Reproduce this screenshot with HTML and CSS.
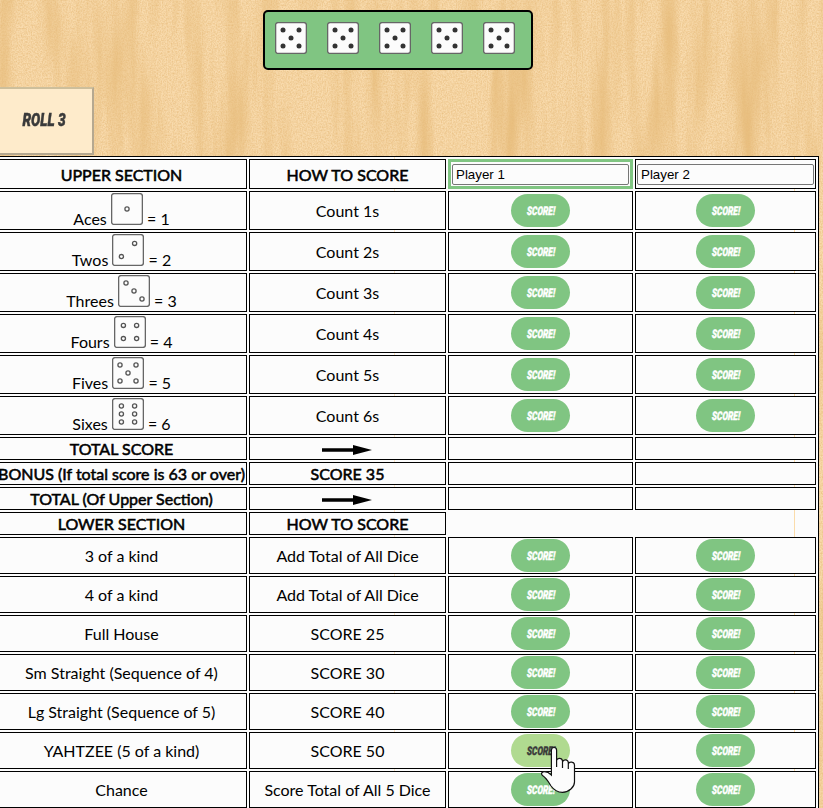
FILE: index.html
```html
<!DOCTYPE html>
<html lang="en">
<head>
<meta charset="utf-8">
<title>Yahtzee</title>
<link rel="stylesheet" href="styles.css">
</head>
<body>
<svg class="wood" aria-hidden="true">
  <filter id="streaks" x="0" y="0" width="100%" height="100%" color-interpolation-filters="sRGB">
    <feTurbulence type="fractalNoise" baseFrequency="0.05 0.005" numOctaves="3" seed="11"/>
    <feColorMatrix values="0 0 0 0 0.9  0 0 0 0 0.73  0 0 0 0 0.47  1.8 0 0 0 -0.75"/>
  </filter>
  <filter id="grain" x="0" y="0" width="100%" height="100%" color-interpolation-filters="sRGB">
    <feTurbulence type="fractalNoise" baseFrequency="0.8 0.6" numOctaves="2" seed="3"/>
    <feColorMatrix values="0 0 0 0 0.9  0 0 0 0 0.73  0 0 0 0 0.48  0 1.3 0 0 -0.4"/>
  </filter>
  <rect width="100%" height="100%" filter="url(#streaks)"/>
  <rect width="100%" height="100%" filter="url(#grain)"/>
</svg>
<svg class="defs" aria-hidden="true">
  <symbol id="face" viewBox="0 0 32 32"><rect x=".6" y=".6" width="30.800" height="30.800" rx="2.500" fill="#fcfcfc" stroke="#666" stroke-width="1.400"/></symbol>
  <symbol id="rolled" viewBox="0 0 32 32"><use href="#face"/><g fill="#333"><circle cx="8" cy="8" r="2.5"/><circle cx="24" cy="8" r="2.5"/><circle cx="16" cy="16" r="2.5"/><circle cx="8" cy="24" r="2.5"/><circle cx="24" cy="24" r="2.5"/></g></symbol>
  <symbol id="arrow" viewBox="0 0 50 10"><path d="M0 3.2H31V0L50 5L31 10V6.8H0Z"/></symbol>
</svg>
<header class="tray">
  <svg class="die"><use href="#rolled"/></svg>
  <svg class="die"><use href="#rolled"/></svg>
  <svg class="die"><use href="#rolled"/></svg>
  <svg class="die"><use href="#rolled"/></svg>
  <svg class="die"><use href="#rolled"/></svg>
</header>
<button class="roll"><span>ROLL 3</span></button>
<main class="card">
  <div class="cell head">UPPER SECTION</div><div class="cell head">HOW TO SCORE</div>
  <div class="cell active"><input value="Player 1"></div><div class="cell"><input value="Player 2"></div>

  <div class="cell dice"><p>Aces <svg class="die"><use href="#face"/><circle cx="16" cy="16" r="2.1"/></svg> = 1</p></div><div class="cell">Count 1s</div>
  <div class="cell"><button class="score"><span>SCORE!</span></button></div><div class="cell"><button class="score"><span>SCORE!</span></button></div>

  <div class="cell dice"><p>Twos <svg class="die"><use href="#face"/><circle cx="22.6" cy="9.4" r="2.1"/><circle cx="9.4" cy="22.6" r="2.1"/></svg> = 2</p></div><div class="cell">Count 2s</div>
  <div class="cell"><button class="score"><span>SCORE!</span></button></div><div class="cell"><button class="score"><span>SCORE!</span></button></div>

  <div class="cell dice"><p>Threes <svg class="die"><use href="#face"/><circle cx="8" cy="8" r="2.1"/><circle cx="16" cy="16" r="2.1"/><circle cx="24" cy="24" r="2.1"/></svg> = 3</p></div><div class="cell">Count 3s</div>
  <div class="cell"><button class="score"><span>SCORE!</span></button></div><div class="cell"><button class="score"><span>SCORE!</span></button></div>

  <div class="cell dice"><p>Fours <svg class="die"><use href="#face"/><circle cx="9.4" cy="9.4" r="2.1"/><circle cx="22.6" cy="9.4" r="2.1"/><circle cx="9.4" cy="22.6" r="2.1"/><circle cx="22.6" cy="22.6" r="2.1"/></svg> = 4</p></div><div class="cell">Count 4s</div>
  <div class="cell"><button class="score"><span>SCORE!</span></button></div><div class="cell"><button class="score"><span>SCORE!</span></button></div>

  <div class="cell dice"><p>Fives <svg class="die"><use href="#face"/><circle cx="8" cy="8" r="2.1"/><circle cx="24" cy="8" r="2.1"/><circle cx="16" cy="16" r="2.1"/><circle cx="8" cy="24" r="2.1"/><circle cx="24" cy="24" r="2.1"/></svg> = 5</p></div><div class="cell">Count 5s</div>
  <div class="cell"><button class="score"><span>SCORE!</span></button></div><div class="cell"><button class="score"><span>SCORE!</span></button></div>

  <div class="cell dice"><p>Sixes <svg class="die"><use href="#face"/><circle cx="9.4" cy="8" r="2.1"/><circle cx="22.6" cy="8" r="2.1"/><circle cx="9.4" cy="16" r="2.1"/><circle cx="22.6" cy="16" r="2.1"/><circle cx="9.4" cy="24" r="2.1"/><circle cx="22.6" cy="24" r="2.1"/></svg> = 6</p></div><div class="cell">Count 6s</div>
  <div class="cell"><button class="score"><span>SCORE!</span></button></div><div class="cell"><button class="score"><span>SCORE!</span></button></div>

  <div class="cell head">TOTAL SCORE</div><div class="cell"><svg class="arrow"><use href="#arrow"/></svg></div><div class="cell"></div><div class="cell"></div>
  <div class="cell head">BONUS (If total score is 63 or over)</div><div class="cell head">SCORE 35</div><div class="cell"></div><div class="cell"></div>
  <div class="cell head">TOTAL (Of Upper Section)</div><div class="cell"><svg class="arrow"><use href="#arrow"/></svg></div><div class="cell"></div><div class="cell"></div>
  <div class="cell head">LOWER SECTION</div><div class="cell head">HOW TO SCORE</div><div class="blank"></div>

  <div class="cell">3 of a kind</div><div class="cell">Add Total of All Dice</div>
  <div class="cell"><button class="score"><span>SCORE!</span></button></div><div class="cell"><button class="score"><span>SCORE!</span></button></div>

  <div class="cell">4 of a kind</div><div class="cell">Add Total of All Dice</div>
  <div class="cell"><button class="score"><span>SCORE!</span></button></div><div class="cell"><button class="score"><span>SCORE!</span></button></div>

  <div class="cell">Full House</div><div class="cell">SCORE 25</div>
  <div class="cell"><button class="score"><span>SCORE!</span></button></div><div class="cell"><button class="score"><span>SCORE!</span></button></div>

  <div class="cell">Sm Straight (Sequence of 4)</div><div class="cell">SCORE 30</div>
  <div class="cell"><button class="score"><span>SCORE!</span></button></div><div class="cell"><button class="score"><span>SCORE!</span></button></div>

  <div class="cell">Lg Straight (Sequence of 5)</div><div class="cell">SCORE 40</div>
  <div class="cell"><button class="score"><span>SCORE!</span></button></div><div class="cell"><button class="score"><span>SCORE!</span></button></div>

  <div class="cell">YAHTZEE (5 of a kind)</div><div class="cell">SCORE 50</div>
  <div class="cell"><button class="score hover"><span>SCORE!</span></button></div><div class="cell"><button class="score"><span>SCORE!</span></button></div>

  <div class="cell">Chance</div><div class="cell">Score Total of All 5 Dice</div>
  <div class="cell"><button class="score"><span>SCORE!</span></button></div><div class="cell"><button class="score"><span>SCORE!</span></button></div>
</main>
<svg class="cursor" viewBox="0 0 36 48" aria-hidden="true"><path d="M11.4 29V4.2C11.4 .6 16.6 .6 16.6 4.2V21V14.5C17.2 11.6 22 11.8 22.5 15V22V16C23.2 13 28 13.4 28.3 16.5V23V18C29 15.2 34.5 15.5 34.5 19V36C34.5 41 29 46.3 22.5 46.3C16.5 46.3 13.5 43.5 11 40C8.5 36 6.5 32 2.5 29.5C.5 27.5 2 25.7 4.5 25.7C7.5 25.7 9.5 27.2 11.4 29Z"/></svg>
</body>
</html>
```
FILE: styles.css
```css
* { box-sizing: border-box; }
body {
  margin: 0;
  height: 808px;
  overflow: hidden;
  background: #f9dbad;
  font: 16px/20px Lato, sans-serif;
  color: #000;
}
.wood { position: fixed; inset: 0; width: 100%; height: 100%; z-index: -1; }
.defs { position: absolute; width: 0; height: 0; }
.die { width: 32px; height: 32px; flex: none; }
.tray {
  display: flex;
  gap: 20px;
  width: 270px;
  height: 60px;
  margin: 10px 0 17px 263px;
  padding: 10px;
  border: 2px solid #000;
  border-radius: 5px;
  background: #80c582;
}
.roll {
  display: block;
  width: 98px;
  height: 68px;
  margin: 0 0 1px -4px;
  padding: 0;
  border: 2px solid;
  border-color: #cdbf9c #b5a890 #b5a890 #cdbf9c;
  background: #feebcb;
  color: #3a3a3a;
  font: italic 900 19px/22px "Roboto", sans-serif;
}
.roll span {
  display: inline-block;
  transform: translate(-1px, -1px) scaleX(.72);
  -webkit-text-stroke: .5px currentColor;
}
.card {
  display: grid;
  grid-template-columns: 251px 197px 185px 181px;
  grid-template-rows: 30px repeat(6, 39px) repeat(4, 23px) repeat(7, 37px);
  gap: 2px;
  width: 826px;
  margin-left: -7px;
  padding: 2px;
  border: 1px solid #000;
  background:
    linear-gradient(#fbdcab, #fbdcab) 800px 0 / 1px 100% no-repeat,
    linear-gradient(#fbe6c8, #fbe6c8) 400px 0 / 1px 100% no-repeat,
    #fcfcfc;
}
.cell {
  display: flex;
  align-items: center;
  justify-content: center;
  border: 1px solid #000;
  background: #fcfcfc;
  white-space: nowrap;
  min-width: 0;
  padding-top: 1px;
}
.cell:has(.score), .cell:has(input) { padding-top: 0; }
.head { -webkit-text-stroke: .55px #000; }
.active { border: 3px solid #80c582; }
.blank { grid-column: span 2; }
.dice { align-items: flex-start; }
.dice p { margin: 0; line-height: 32px; height: 36px; }
.dice .die { fill: none; stroke: #555; stroke-width: 1.3; vertical-align: baseline; }
.arrow { width: 50px; height: 10px; margin: 2px 2px 0 0; }
input {
  width: 177px;
  height: 21px;
  padding: 1px 3px;
  border: 1px solid #767676;
  border-radius: 2px;
  background: #fcfcfc;
  color: #000;
  font: 13.33px "Liberation Sans", Arial, sans-serif;
}
.score {
  width: 59px;
  height: 33px;
  padding: 0;
  border: 0;
  border-radius: 17px;
  background: #80c582;
  color: #fff;
  font: italic 900 12px/14px "Roboto", sans-serif;
}
.score span {
  display: inline-block;
  width: 48px;
  margin: 0 -6px;
  transform: scaleX(.7) skewX(-4deg);
  -webkit-text-stroke: .4px currentColor;
}
.score.hover { background: #b0da90; color: #3a3a3a; }
.cursor {
  position: absolute;
  left: 540px;
  top: 746px;
  width: 36px;
  height: 48px;
  fill: #fcfcfc;
  stroke: #111;
  stroke-width: 1.2;
}
```
